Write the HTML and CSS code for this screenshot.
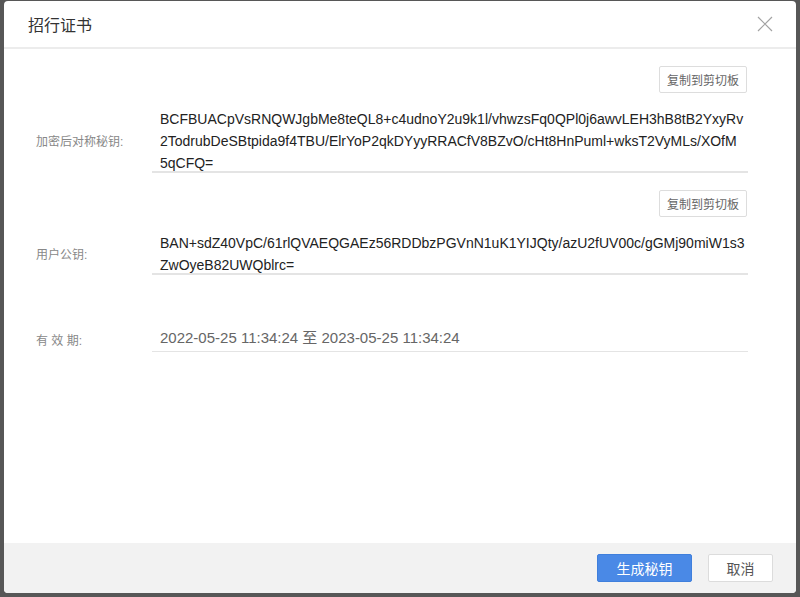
FILE: index.html
```html
<html>
<head>
<title>招行证书</title>
<link rel="stylesheet" href="styles.css">
</head>
<body>
<div class="backdrop">
  <div class="dialog">
    <div class="dialog-header">
      <span class="dialog-title">招行证书</span>
      <span class="close-btn">
        <svg width="16" height="16" viewBox="0 0 16 16"><path d="M1 1 L15 15 M15 1 L1 15" stroke="#a3a3a3" stroke-width="1.2" fill="none"/></svg>
      </span>
    </div>

    <div class="dialog-body">
      <div class="copy-row">
        <button class="btn-copy">复制到剪切板</button>
      </div>
      <div class="field">
        <div class="field-label">加密后对称秘钥:</div>
        <div class="field-value">
          <div class="value-text">BCFBUACpVsRNQWJgbMe8teQL8+c4udnoY2u9k1l/vhwzsFq0QPl0j6awvLEH3hB8tB2YxyRv2TodrubDeSBtpida9f4TBU/ElrYoP2qkDYyyRRACfV8BZvO/cHt8HnPuml+wksT2VyMLs/XOfM5qCFQ=</div>
        </div>
      </div>

      <div class="copy-row copy-row-2">
        <button class="btn-copy">复制到剪切板</button>
      </div>
      <div class="field">
        <div class="field-label">用户公钥:</div>
        <div class="field-value field-value-wide">
          <div class="value-text">BAN+sdZ40VpC/61rlQVAEQGAEz56RDDbzPGVnN1uK1YIJQty/azU2fUV00c/gGMj90miW1s3ZwOyeB82UWQblrc=</div>
        </div>
      </div>

      <div class="field field-date">
        <div class="field-label">有 效 期:</div>
        <div class="field-value date-value">2022-05-25 11:34:24 至 2023-05-25 11:34:24</div>
      </div>
    </div>

    <div class="dialog-footer">
      <button class="btn btn-primary">生成秘钥</button>
      <button class="btn btn-default">取消</button>
    </div>
  </div>
</div>
</body>
</html>
```

FILE: styles.css
```css
body {
  margin: 0;
  font-family: "Liberation Sans", Arial, "Noto Sans CJK SC", sans-serif;
}
.backdrop {
  width: 800px;
  height: 597px;
  background-color: #575757;
  padding: 1px 4px 0;
  box-sizing: border-box;
}
.dialog {
  height: 592px;
  background: #fff;
  border-radius: 4px;
  display: flex;
  flex-direction: column;
  overflow: hidden;
}
.dialog-header {
  height: 46px;
  border-bottom: 2px solid #ececec;
  padding: 0 24px;
  display: flex;
  align-items: center;
  justify-content: space-between;
}
.dialog-title {
  font-size: 16px;
  color: #333;
}
.close-btn {
  display: flex;
  margin-right: -1px;
}
.dialog-body {
  flex: 1;
  padding: 17px 48px 0 32px;
}
.copy-row {
  display: flex;
  justify-content: flex-end;
}
.copy-row-2 {
  margin-top: 17px;
}
.btn-copy {
  height: 27px;
  padding: 0 7px;
  margin-right: 1px;
  font-family: inherit;
  font-size: 12px;
  color: #666;
  background: #fff;
  border: 1px solid #ddd;
  border-radius: 2px;
}
.field {
  display: flex;
  align-items: center;
  margin-top: 15px;
}
.field-date {
  margin-top: 52px;
}
.field-label {
  width: 116px;
  flex-shrink: 0;
  font-size: 12px;
  color: #888;
}
.field-value {
  flex: 1;
  padding: 0 4px 0 8px;
  font-size: 14px;
  line-height: 22px;
  color: #222;
  word-break: break-all;
  border-bottom: 2px solid #e4e4e4;
}
.field-value-wide {
  padding-right: 0;
}
.value-text {
  margin-bottom: -3px;
}
.date-value {
  font-size: 15px;
  color: #666;
  padding-bottom: 2px;
  border-bottom-width: 1px;
}
.dialog-footer {
  height: 50px;
  background: #f2f2f2;
  display: flex;
  align-items: center;
  justify-content: flex-end;
  gap: 16px;
  padding: 0 23px;
}
.btn {
  height: 28px;
  font-family: inherit;
  font-size: 14px;
  border-radius: 2px;
}
.btn-primary {
  width: 95px;
  background: #4a89e6;
  border: 1px solid #3f7fdc;
  color: #fff;
}
.btn-default {
  width: 65px;
  background: #fff;
  border: 1px solid #dcdcdc;
  color: #555;
}
```
